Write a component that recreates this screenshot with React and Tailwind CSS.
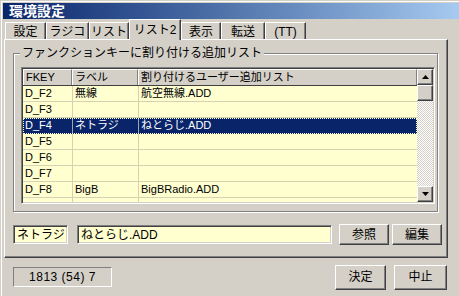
import React from "react";

const raised =
  "border border-t-white border-l-white border-r-[#404040] border-b-[#404040] shadow-[inset_-1px_-1px_0_#808080]";
const sunken =
  "border border-t-[#808080] border-l-[#808080] border-r-white border-b-white shadow-[inset_1px_1px_0_#404040,inset_-1px_-1px_0_#d4d0c8]";

const tabs = [
  { label: "設定", w: "w-[41px]" },
  { label: "ラジコ", w: "w-[43px]" },
  { label: "リスト", w: "w-[40px]" },
  { label: "リスト2", w: "w-[52px]", active: true },
  { label: "表示", w: "w-[40px]" },
  { label: "転送", w: "w-[44px]" },
  { label: "(TT)", w: "w-[41px]" },
];

const rows = [
  ["D_F2", "無線", "航空無線.ADD"],
  ["D_F3", "", ""],
  ["D_F4", "ネトラジ", "ねとらじ.ADD", true],
  ["D_F5", "", ""],
  ["D_F6", "", ""],
  ["D_F7", "", ""],
  ["D_F8", "BigB", "BigBRadio.ADD"],
  ["", "", ""],
];

const Arrow = ({ down }) => (
  <svg width="7" height="4" viewBox="0 0 7 4" className={down ? "rotate-180" : ""}>
    <path d="M3.5 0L7 4H0z" fill="#000" />
  </svg>
);

const Button = ({ children, className }) => (
  <div className={`${raised} bg-[#d4d0c8] flex items-center justify-center ${className}`}>
    {children}
  </div>
);

export default function App() {
  return (
    <div
      className="w-[459px] h-[296px] bg-[#d4d0c8] pl-[3px] pt-[3px] overflow-hidden text-[12px] leading-none text-black shadow-[inset_1px_1px_0_#d4d0c8,inset_2px_2px_0_#fff]"
      style={{ fontFamily: '"Liberation Sans", "Noto Sans CJK JP", sans-serif' }}
    >
      {/* title bar */}
      <div className="h-[16px] bg-linear-to-r from-[#0a246a] to-[#a6caf0] flex items-center pl-[6px]">
        <span className="text-white font-bold text-[14px]">環境設定</span>
      </div>

      {/* tabs */}
      <div className="h-[20px] flex items-end pl-[2px]">
        {tabs.map((t) =>
          t.active ? (
            <div
              key={t.label}
              className={`${t.w} h-[21px] -mb-[1px] relative z-10 bg-[#d4d0c8] border-t border-l border-t-white border-l-white border-r border-r-[#404040] shadow-[inset_-1px_0_0_#808080] flex items-center justify-center pb-[1px]`}
            >
              {t.label}
            </div>
          ) : (
            <div
              key={t.label}
              className={`${t.w} h-[17px] border-t border-l border-t-white border-l-white border-r border-r-[#404040] shadow-[inset_-1px_0_0_#808080] flex items-center justify-center pt-[1px]`}
            >
              {t.label}
            </div>
          )
        )}
      </div>

      {/* panel */}
      <div className="ml-[1px] w-[444px] h-[219px] border border-t-white border-l-white border-r-[#404040] border-b-[#404040] shadow-[inset_-1px_-1px_0_#808080] pl-[8px] pt-[13px]">
        {/* group box */}
        <div className="relative w-[425px] h-[159px] border border-[#808080] shadow-[1px_1px_0_#fff,inset_1px_1px_0_#fff] pl-[7px] pt-[13px]">
          <span className="absolute -top-[7px] left-[6px] px-[2px] bg-[#d4d0c8]">
            ファンクションキーに割り付ける追加リスト
          </span>

          {/* list view */}
          <div className={`${sunken} w-[414px] h-[137px] p-[1px] flex bg-[#ffffd0]`}>
            <div className="flex-1 flex flex-col overflow-hidden text-[11px]">
              <div className="h-[17px] flex shrink-0 bg-[#d4d0c8] border-b border-[#404040]">
                {[
                  ["FKEY", "w-[49px]"],
                  ["ラベル", "w-[66px]"],
                  ["割り付けるユーザー追加リスト", "flex-1"],
                ].map(([h, w]) => (
                  <div
                    key={h}
                    className={`${w} border-t border-l border-t-white border-l-white border-r border-r-[#808080] flex items-center pl-[2px]`}
                  >
                    {h}
                  </div>
                ))}
              </div>
              {rows.map(([k, l, f, sel], i) => (
                <div
                  key={i}
                  className={`h-[16px] shrink-0 flex border-b ${
                    sel
                      ? "bg-[#0a246a] text-white border-b-transparent outline-1 outline-dotted outline-[#ffffd0] -outline-offset-1"
                      : "border-b-[#d6d2b0]"
                  }`}
                >
                  <div className="w-[49px] pl-[2px] flex items-center">{k}</div>
                  <div className={`w-[66px] pl-[2px] flex items-center border-l ${sel ? "border-[#ffffd0]/60" : "border-[#d6d2b0]"}`}>
                    {l}
                  </div>
                  <div className={`flex-1 pl-[2px] flex items-center border-l ${sel ? "border-[#ffffd0]/60" : "border-[#d6d2b0]"}`}>
                    {f}
                  </div>
                </div>
              ))}
            </div>

            {/* scrollbar */}
            <div className="w-[16px] flex flex-col bg-[repeating-conic-gradient(#ffffff_0%_25%,#d4d0c8_0%_50%)] bg-[length:2px_2px]">
              <Button className="h-[16px] w-[16px]">
                <Arrow />
              </Button>
              <div className={`${raised} bg-[#d4d0c8] h-[16px] w-[16px]`} />
              <div className="flex-1" />
              <Button className="h-[16px] w-[16px]">
                <Arrow down />
              </Button>
            </div>
          </div>
        </div>

        {/* edit row */}
        <div className="mt-[12px] flex items-center">
          <div className={`${sunken} w-[55px] h-[19px] bg-[#ffffd0] flex items-center pl-[3px]`}>
            ネトラジ
          </div>
          <div className={`${sunken} ml-[9px] w-[255px] h-[19px] bg-[#ffffd0] flex items-center pl-[3px]`}>
            ねとらじ.ADD
          </div>
          <Button className="ml-[7px] w-[50px] h-[21px]">参照</Button>
          <Button className="ml-[3px] w-[50px] h-[21px]">編集</Button>
        </div>
      </div>

      {/* footer */}
      <div className="flex items-center h-[38px]">
        <div className="ml-[10px] w-[99px] h-[20px] border border-t-[#808080] border-l-[#808080] border-r-white border-b-white flex items-center justify-center tracking-[0.5px]">
          1813 (54) 7
        </div>
        <Button className="ml-[223px] w-[51px] h-[25px]">決定</Button>
        <Button className="ml-[8px] w-[53px] h-[25px]">中止</Button>
      </div>
    </div>
  );
}
